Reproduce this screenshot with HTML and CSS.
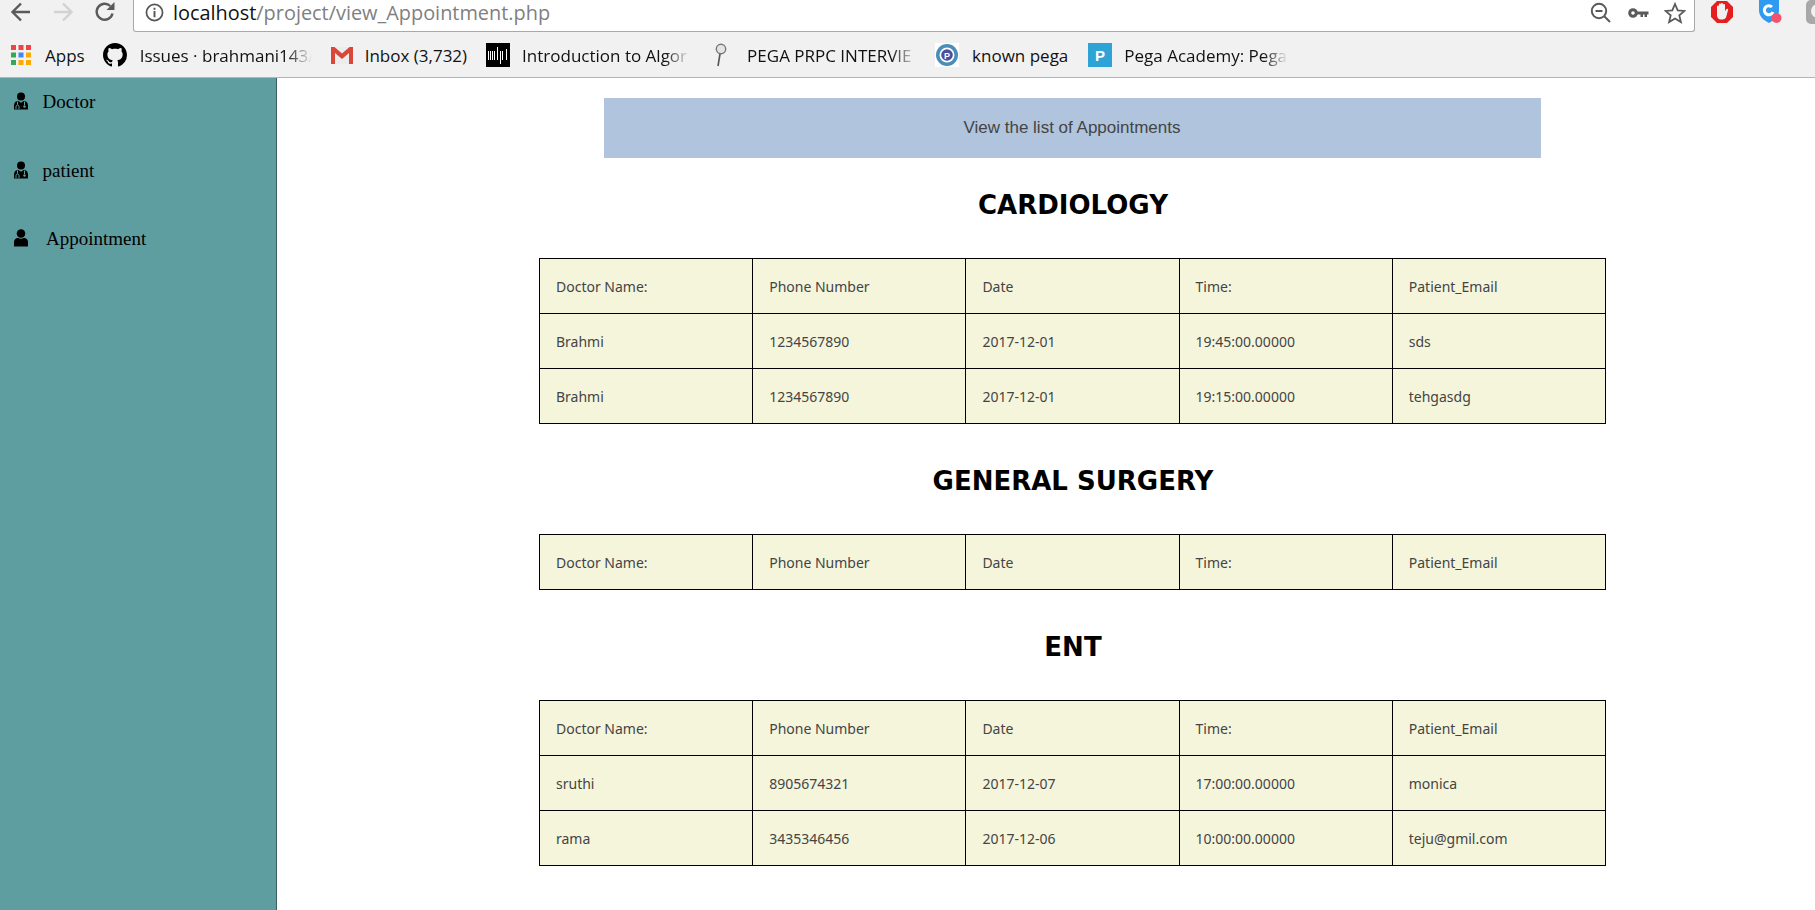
FILE: index.html
```html
<!DOCTYPE html>
<html lang="en">
<head>
    <meta charset="UTF-8">
    <title>View Appointments</title>
    <link rel="stylesheet" href="styles.css">
</head>
<body>

    <!-- browser toolbar -->
    <div class="toolbar">
        <div class="nav-buttons">
            <svg class="nav-icon" viewBox="0 0 24 24"><path d="M21 12H4M12 3.500L3.500 12l8.500 8.500" fill="none" stroke="#5a5a5a" stroke-width="2.400"/></svg>
            <svg class="nav-icon" viewBox="0 0 24 24"><path d="M3 12h17M12 3.500l8.500 8.500L12 20.500" fill="none" stroke="#d2d2d2" stroke-width="2.400"/></svg>
            <svg class="nav-icon" viewBox="0 0 24 24"><path d="M19.500 13.500A8 8 0 1 1 17.300 6" fill="none" stroke="#5a5a5a" stroke-width="2.400"/><path d="M21.500 2v8h-8z" fill="#5a5a5a"/></svg>
        </div>
        <div class="omnibox">
            <svg class="info-icon" viewBox="0 0 20 20"><circle cx="10" cy="10" r="8.500" fill="none" stroke="#555" stroke-width="1.800"/><path d="M9 8.500h2V15H9zM9 5h2v2H9z" fill="#555"/></svg>
            <span class="url"><b>localhost</b>/project/view_Appointment.php</span>
            <div class="omni-actions">
                <svg class="omni-icon" viewBox="0 0 22 22"><circle cx="9" cy="9" r="7.200" fill="none" stroke="#5a5a5a" stroke-width="2"/><path d="M5.500 9h7M14 14l6 6" stroke="#5a5a5a" stroke-width="2" fill="none"/></svg>
                <svg class="omni-icon" viewBox="0 0 22 22"><circle cx="6" cy="11" r="3.300" fill="none" stroke="#5a5a5a" stroke-width="3"/><path d="M9 9.500h12.500v3H20V15h-2.500v-2.500H16V15h-2.500v-2.500H9z" fill="#5a5a5a"/></svg>
                <svg class="omni-icon" viewBox="0 0 22 22"><path d="M11 2l2.700 6.300 6.800.6-5.200 4.500 1.600 6.700L11 16.500l-5.900 3.600 1.600-6.700L1.500 8.900l6.800-.6z" fill="none" stroke="#5a5a5a" stroke-width="1.800"/></svg>
            </div>
        </div>
        <div class="extensions">
            <svg class="ext-icon" viewBox="0 0 24 24"><path d="M7 1h10l6 6v10l-6 6H7l-6-6V7z" fill="#e3201f"/><path d="M7 12V6.500a1 1 0 0 1 2 0V4.500a1 1 0 0 1 2 0V4a1 1 0 0 1 2 0v1a1 1 0 0 1 2 0v6l1.500-2a1 1 0 0 1 1.500 1.300L16 17.500c-.8 1.300-2 2-3.500 2H11c-2.500 0-4-1.700-4-4z" fill="#f1f1f1"/></svg>
            <svg class="ext-icon" viewBox="0 0 24 24"><path d="M1 0h20v10c0 6-4 10-10 13C5 20 1 16 1 10z" fill="#2f9bf0"/><path d="M15 12a4.500 4.500 0 1 1-1-5" fill="none" stroke="#fff" stroke-width="3"/><circle cx="18.500" cy="18" r="5" fill="#f4516c"/></svg>
            <svg class="ext-icon" viewBox="0 0 24 24"><rect width="24" height="24" rx="5" fill="#a8a8a8"/><circle cx="12" cy="11" r="7" fill="#f1f1f1"/></svg>
        </div>
    </div>

    <!-- bookmarks bar -->
    <div class="bookmarks">
        <a class="bookmark">
            <svg class="bm-icon apps" viewBox="0 0 20 20">
                <rect width="5" height="5" fill="#ef4444"/><rect x="7.500" width="5" height="5" fill="#ef4444"/><rect x="15" width="5" height="5" fill="#ef4444"/>
                <rect y="7.500" width="5" height="5" fill="#34a853"/><rect x="7.500" y="7.500" width="5" height="5" fill="#4285f4"/><rect x="15" y="7.500" width="5" height="5" fill="#fbab00"/>
                <rect y="15" width="5" height="5" fill="#34a853"/><rect x="7.500" y="15" width="5" height="5" fill="#fbab00"/><rect x="15" y="15" width="5" height="5" fill="#fbab00"/>
            </svg>
            <span>Apps</span>
        </a>
        <a class="bookmark wide-gap">
            <svg class="bm-icon" viewBox="0 0 16 16"><path d="M8 0C3.580 0 0 3.580 0 8c0 3.540 2.290 6.530 5.470 7.590.4.070.55-.17.55-.38 0-.19-.01-.82-.01-1.490-2.010.37-2.530-.49-2.690-.94-.09-.23-.48-.94-.82-1.130-.28-.15-.68-.52-.01-.53.630-.01 1.080.58 1.230.82.720 1.210 1.870.87 2.330.66.070-.52.280-.87.510-1.070-1.780-.2-3.640-.89-3.640-3.950 0-.87.310-1.590.820-2.150-.08-.2-.36-1.020.08-2.120 0 0 .67-.21 2.200.82.640-.18 1.320-.27 2-.27s1.360.09 2 .27c1.530-1.040 2.200-.82 2.200-.82.440 1.100.16 1.920.08 2.120.51.560.82 1.270.82 2.150 0 3.070-1.870 3.750-3.650 3.950.29.250.54.730.54 1.480 0 1.070-.01 1.930-.01 2.200 0 .21.150.46.550.38A8.010 8.010 0 0 0 16 8c0-4.420-3.580-8-8-8z"/></svg>
            <span class="fade issues">Issues · brahmani143/</span>
        </a>
        <a class="bookmark inbox">
            <svg class="bm-icon" viewBox="0 0 24 24"><path d="M2 4h20v17H2z" fill="#ececec"/><path d="M1 4h3.500L12 10.500 19.500 4H23v17h-4V10l-7 6-7-6v11H1z" fill="#d9473b"/></svg>
            <span>Inbox (3,732)</span>
        </a>
        <a class="bookmark">
            <svg class="bm-icon" viewBox="0 0 24 24"><rect width="24" height="24" fill="#000"/><path d="M2.500 8v9M4.500 8v9M6.500 8v9M8.500 8v9M11.500 4v13M14.500 8v13M16.500 8v9M20.500 6v11" stroke="#fff" stroke-width="1"/></svg>
            <span class="fade">Introduction to Algor</span>
        </a>
        <a class="bookmark prpc">
            <svg class="bm-icon" viewBox="0 0 24 24"><circle cx="13" cy="6" r="4.700" fill="#e4e4e4" stroke="#777" stroke-width="1.400"/><path d="M12 11l-2 12" stroke="#555" stroke-width="1.600"/></svg>
            <span class="fade prpc-label">PEGA PRPC INTERVIE</span>
        </a>
        <a class="bookmark wide-gap known">
            <svg class="bm-icon" viewBox="0 0 24 24"><rect width="24" height="24" fill="#fff"/><circle cx="12" cy="12" r="11" fill="#4a8db8"/><circle cx="12" cy="12" r="7.500" fill="#fff"/><circle cx="12" cy="12" r="5.800" fill="#4b4f9e"/><text x="12" y="15.500" font-size="9" font-weight="700" fill="#fff" text-anchor="middle" font-family="Liberation Sans">P</text></svg>
            <span>known pega</span>
        </a>
        <a class="bookmark">
            <svg class="bm-icon" viewBox="0 0 24 24"><rect width="24" height="24" fill="#2ea3d5"/><text x="12" y="18" font-size="15" font-weight="700" fill="#fff" text-anchor="middle" font-family="Liberation Sans">P</text></svg>
            <span class="fade academy-label">Pega Academy: Pega</span>
        </a>
    </div>

    <div class="page">
        <!-- side menu -->
        <nav class="sidebar">
            <a class="menu-item">
                <svg class="menu-icon" viewBox="0 0 16 18"><circle cx="8" cy="4.500" r="4"/><path d="M1 17.500v-4c0-3 2-4.500 4-4.700l3 2 3-2c2 .2 4 1.700 4 4.700v4z"/><path d="M4.500 9.500v3M3 17v-2.500a1.500 1.500 0 0 1 3 0V17M11.500 9.500v3.500" stroke="#5f9ea0" stroke-width="1" fill="none"/><circle cx="11.500" cy="14.500" r="1.200" fill="#5f9ea0"/></svg>
                Doctor
            </a>
            <a class="menu-item">
                <svg class="menu-icon" viewBox="0 0 16 18"><circle cx="8" cy="4.500" r="4"/><path d="M1 17.500v-4c0-3 2-4.500 4-4.700l3 2 3-2c2 .2 4 1.700 4 4.700v4z"/><path d="M4.500 9.500v3M3 17v-2.500a1.500 1.500 0 0 1 3 0V17M11.500 9.500v3.500" stroke="#5f9ea0" stroke-width="1" fill="none"/><circle cx="11.500" cy="14.500" r="1.200" fill="#5f9ea0"/></svg>
                patient
            </a>
            <a class="menu-item appointment">
                <svg class="menu-icon" viewBox="0 0 16 18"><circle cx="8" cy="4.500" r="4.300"/><path d="M1 17.500v-4.500c0-2.500 2-4 4-4.200 1.800 1.200 4.200 1.200 6 0 2 .2 4 1.700 4 4.200v4.500z"/></svg>
                Appointment
            </a>
        </nav>

        <!-- appointments -->
        <main class="content">
            <div class="banner">View the list of Appointments</div>

            <h2>CARDIOLOGY</h2>
            <table>
                <tr><td>Doctor Name:</td><td>Phone Number</td><td>Date</td><td>Time:</td><td>Patient_Email</td></tr>
                <tr><td>Brahmi</td><td>1234567890</td><td>2017-12-01</td><td>19:45:00.00000</td><td>sds</td></tr>
                <tr><td>Brahmi</td><td>1234567890</td><td>2017-12-01</td><td>19:15:00.00000</td><td>tehgasdg</td></tr>
            </table>

            <h2>GENERAL SURGERY</h2>
            <table>
                <tr><td>Doctor Name:</td><td>Phone Number</td><td>Date</td><td>Time:</td><td>Patient_Email</td></tr>
            </table>

            <h2>ENT</h2>
            <table>
                <tr><td>Doctor Name:</td><td>Phone Number</td><td>Date</td><td>Time:</td><td>Patient_Email</td></tr>
                <tr><td>sruthi</td><td>8905674321</td><td>2017-12-07</td><td>17:00:00.00000</td><td>monica</td></tr>
                <tr><td>rama</td><td>3435346456</td><td>2017-12-06</td><td>10:00:00.00000</td><td>teju@gmil.com</td></tr>
            </table>
        </main>
    </div>

</body>
</html>
```

FILE: styles.css
```css
/* whole page */
body {
    margin: 0;
    height: 100vh;
    overflow: hidden;
    display: flex;
    flex-direction: column;
    background-color: #ffffff;
    font-family: "Liberation Serif", serif;
}

/* browser toolbar */
.toolbar {
    height: 33px;
    flex: none;
    background-color: #f1f1f1;
    display: flex;
    align-items: flex-start;
    overflow: hidden;
}

.nav-buttons {
    width: 133px;
    flex: none;
    display: flex;
    gap: 18px;
    padding-left: 9px;
    box-sizing: border-box;
}

.nav-icon {
    width: 24px;
    height: 24px;
}

.omnibox {
    width: 1562px;
    height: 32px;
    flex: none;
    box-sizing: border-box;
    background-color: #ffffff;
    border: 1px solid #a9a9a9;
    border-top: none;
    border-radius: 0 0 3px 3px;
    display: flex;
    align-items: center;
    padding: 0 8px 6px 11px;
    font-family: "Open Sans", sans-serif;
}

.info-icon {
    width: 19px;
    height: 19px;
    margin-right: 9px;
}

.url {
    font-size: 19.900px;
    color: #808080;
}

.url b {
    font-weight: 400;
    color: #111111;
}

.omni-actions {
    margin-left: auto;
    display: flex;
    gap: 15px;
}

.omni-icon {
    width: 22px;
    height: 22px;
}

.extensions {
    flex: none;
    display: flex;
    gap: 24px;
    padding-left: 15px;
}

.ext-icon {
    width: 24px;
    height: 24px;
    flex: none;
}

/* bookmarks bar */
.bookmarks {
    height: 45px;
    flex: none;
    box-sizing: border-box;
    background-color: #f1f1f1;
    border-bottom: 1px solid #b4b4b4;
    display: flex;
    align-items: center;
    padding-left: 11px;
    font-family: "Open Sans", sans-serif;
    font-size: 17px;
    color: #111111;
}

.bookmark {
    display: flex;
    align-items: center;
    gap: 12px;
    margin-right: 18px;
    white-space: nowrap;
}

.wide-gap {
    gap: 13px;
}

.inbox {
    gap: 11px;
    margin-right: 19px;
}

.prpc {
    gap: 15px;
}

.known {
    margin-right: 20px;
}

.bm-icon {
    width: 24px;
    height: 24px;
    flex: none;
}

.bm-icon.apps {
    width: 20px;
    height: 20px;
    margin-right: 2px;
}

/* long bookmark names fade out */
.fade {
    width: 168px;
    -webkit-mask-image: linear-gradient(to right, #000 85%, transparent 100%);
    mask-image: linear-gradient(to right, #000 85%, transparent 100%);
}

.issues {
    width: 172px;
}

.prpc-label {
    width: 170px;
}

.academy-label {
    width: 164px;
}

/* side menu */
.page {
    flex: 1;
    display: flex;
    min-height: 0;
}

.sidebar {
    width: 277px;
    flex: none;
    box-sizing: border-box;
    background-color: #5f9ea0;
    border-right: 1px solid #3b5f60;
    padding: 10px 0 0 13px;
}

.menu-item {
    height: 68.500px;
    display: flex;
    align-items: flex-start;
    gap: 13.500px;
    font-size: 19px;
    line-height: 28px;
    color: #000000;
}

.menu-icon {
    width: 16px;
    height: 18px;
    margin-top: 4px;
    flex: none;
}

.appointment {
    gap: 17px;
}

/* right side content */
.content {
    flex: 1;
    min-width: 0;
    display: flex;
    flex-direction: column;
    align-items: center;
    padding: 20px 0 0 54px;
    font-family: "DejaVu Sans", sans-serif;
}

.banner {
    width: 937px;
    height: 60px;
    margin-right: 2px;
    line-height: 60px;
    background-color: #b0c4de;
    text-align: center;
    font-family: "Liberation Sans", sans-serif;
    font-size: 17px;
    color: #444444;
}

h2 {
    margin: 31px 0 37px;
    font-size: 26px;
    line-height: 32px;
    color: #000000;
}

table {
    width: 1067px;
    table-layout: fixed;
    border-collapse: collapse;
    margin: 0 1px 10px 0;
    background-color: #f5f5dc;
    font-family: "Noto Sans", sans-serif;
    font-size: 14px;
    color: #444444;
}

td {
    height: 54px;
    padding: 0 0 0 16px;
    border: 1px solid #000000;
}
```
